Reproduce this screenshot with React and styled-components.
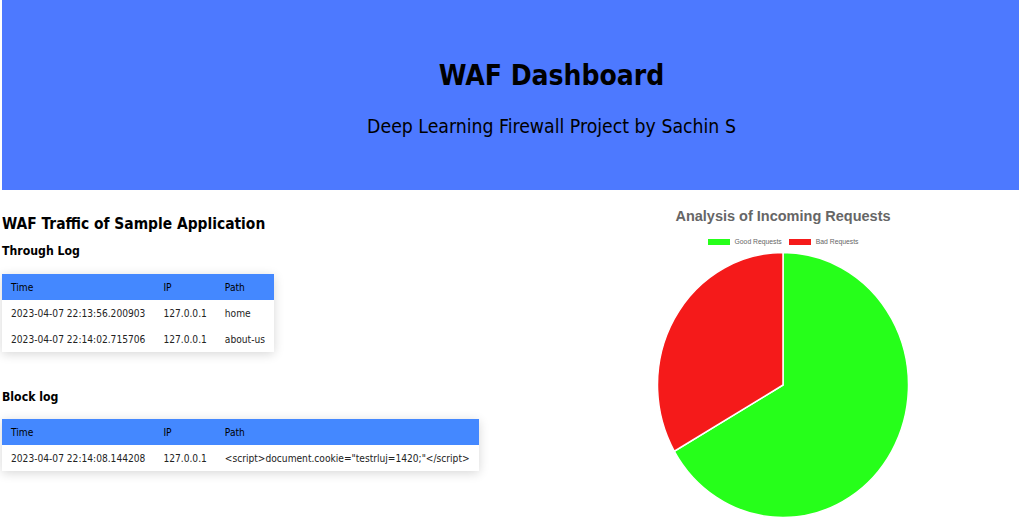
import styled, { createGlobalStyle } from 'styled-components';

const GlobalStyle = createGlobalStyle`
  html, body {
    margin: 0;
    padding: 0;
    background: #ffffff;
  }
  body {
    font-family: "DejaVu Sans Condensed", "DejaVu Sans", sans-serif;
    color: #000;
  }
`;

const Page = styled.div`
  padding-left: 2px;
  width: 1017px;
  overflow: hidden;
`;

const Header = styled.header`
  background: #4d79ff;
  height: 190px;
  display: flex;
  flex-direction: column;
  align-items: center;
  padding-left: 82px;
  box-sizing: border-box;
`;

const Title = styled.h1`
  margin: 58px 0 0;
  font-size: 28px;
  font-weight: bold;
  line-height: 36px;
`;

const Subtitle = styled.p`
  margin: 21px 0 0;
  font-size: 19.3px;
  line-height: 24px;
`;

const Main = styled.main`
  display: grid;
  grid-template-columns: 545px 1fr;
`;

const LogColumn = styled.section`
  padding-top: 23px;
`;

const SectionTitle = styled.h2`
  margin: 0;
  font-size: 15.4px;
  line-height: 22px;
`;

const LogTitle = styled.h3`
  margin: ${(p) => p.$top}px 0 0;
  font-size: 12.2px;
  line-height: 18px;
`;

const LogTable = styled.table`
  margin-top: ${(p) => p.$top}px;
  border-collapse: collapse;
  font-size: 10.15px;
  box-shadow: 0 2px 10px rgba(0, 0, 0, 0.16);
  background: #fff;
`;

const HeadCell = styled.th`
  background: #4488ff;
  text-align: left;
  font-weight: normal;
  height: 26px;
  padding: 0 9px;
  white-space: nowrap;
`;

const Cell = styled.td`
  height: 26px;
  padding: 0 9px;
  white-space: nowrap;
  color: #222;
`;

const ChartColumn = styled.section`
  display: flex;
  flex-direction: column;
  align-items: center;
  padding-top: 16px;
`;

const ChartTitle = styled.div`
  font-family: "Liberation Sans", Arial, sans-serif;
  font-weight: bold;
  font-size: 14.5px;
  color: #666;
  line-height: 20px;
`;

const Legend = styled.div`
  display: flex;
  gap: 7px;
  margin-top: 12px;
  font-family: "Liberation Sans", Arial, sans-serif;
  font-size: 6.8px;
  line-height: 8px;
  color: #666;
`;

const LegendItem = styled.div`
  display: flex;
  align-items: center;
  gap: 5px;
`;

const Swatch = styled.span`
  width: 22px;
  height: 6px;
  background: ${(p) => p.$color};
`;

const PieBox = styled.svg`
  margin-top: 5px;
  display: block;
`;

const GREEN = '#26ff1a';
const RED = '#f51a1a';

const throughLog = [
  { time: '2023-04-07 22:13:56.200903', ip: '127.0.0.1', path: 'home' },
  { time: '2023-04-07 22:14:02.715706', ip: '127.0.0.1', path: 'about-us' },
];

const blockLog = [
  {
    time: '2023-04-07 22:14:08.144208',
    ip: '127.0.0.1',
    path: '<script>document.cookie="testrluj=1420;"</script>',
  },
];

const Log = ({ rows, top }) => (
  <LogTable $top={top}>
    <thead>
      <tr>
        <HeadCell>Time</HeadCell>
        <HeadCell>IP</HeadCell>
        <HeadCell>Path</HeadCell>
      </tr>
    </thead>
    <tbody>
      {rows.map((r, i) => (
        <tr key={i}>
          <Cell>{r.time}</Cell>
          <Cell>{r.ip}</Cell>
          <Cell>{r.path}</Cell>
        </tr>
      ))}
    </tbody>
  </LogTable>
);

// pie slices, clockwise from 12 o'clock
const Pie = ({ good, bad }) => {
  const rx = 125.5;
  const ry = 132.5;
  const cx = 127;
  const cy = 134;
  const total = good + bad;
  const a = (good / total) * Math.PI * 2;
  const x = cx + rx * Math.sin(a);
  const y = cy - ry * Math.cos(a);
  const large = good / total > 0.5 ? 1 : 0;
  return (
    <PieBox width="254" height="268" viewBox="0 0 254 268">
      <path
        d={`M${cx} ${cy} L${cx} ${cy - ry} A${rx} ${ry} 0 ${large} 1 ${x} ${y} Z`}
        fill={GREEN}
        stroke="#fff"
        strokeWidth="1.5"
      />
      <path
        d={`M${cx} ${cy} L${x} ${y} A${rx} ${ry} 0 ${1 - large} 1 ${cx} ${cy - ry} Z`}
        fill={RED}
        stroke="#fff"
        strokeWidth="1.5"
      />
    </PieBox>
  );
};

export default function App() {
  return (
    <Page>
      <GlobalStyle />
      <Header>
        <Title>WAF Dashboard</Title>
        <Subtitle>Deep Learning Firewall Project by Sachin S</Subtitle>
      </Header>
      <Main>
        <LogColumn>
          <SectionTitle>WAF Traffic of Sample Application</SectionTitle>
          <LogTitle $top={7}>Through Log</LogTitle>
          <Log rows={throughLog} top={14} />
          <LogTitle $top={36}>Block log</LogTitle>
          <Log rows={blockLog} top={13} />
        </LogColumn>
        <ChartColumn>
          <ChartTitle>Analysis of Incoming Requests</ChartTitle>
          <Legend>
            <LegendItem>
              <Swatch $color={GREEN} />
              Good Requests
            </LegendItem>
            <LegendItem>
              <Swatch $color={RED} />
              Bad Requests
            </LegendItem>
          </Legend>
          <Pie good={2} bad={1} />
        </ChartColumn>
      </Main>
    </Page>
  );
}
